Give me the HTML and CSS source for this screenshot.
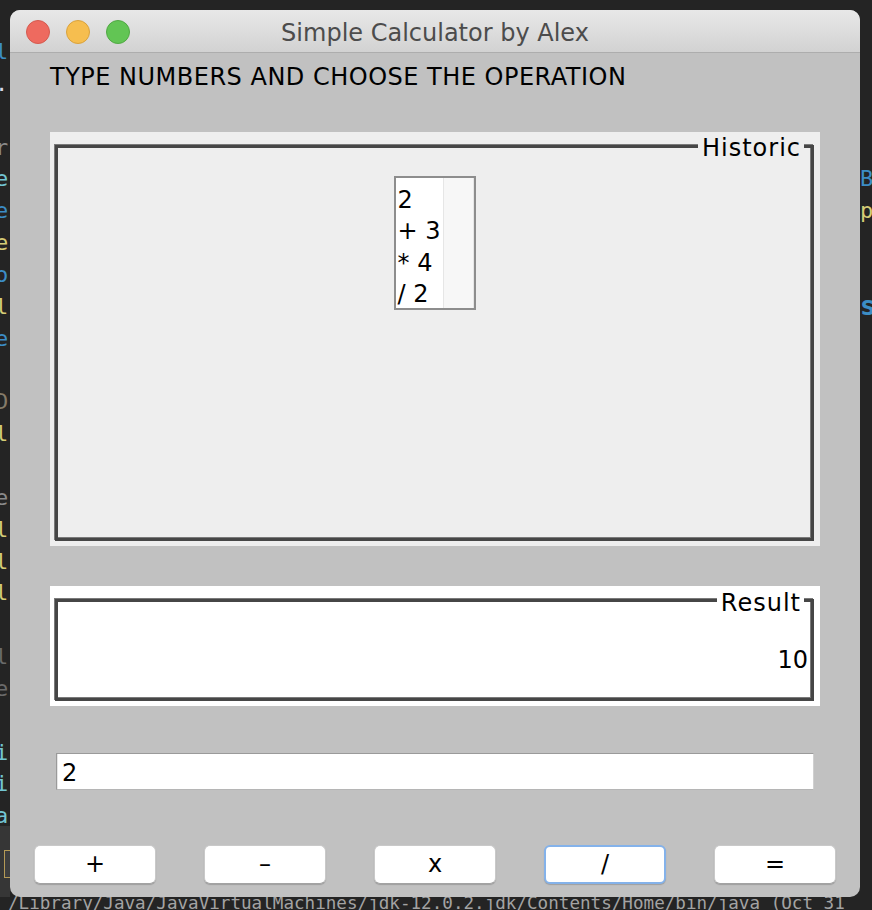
FILE: index.html
```html
<!DOCTYPE html>
<html>
<head>
<meta charset="utf-8">
<link rel="stylesheet" href="styles.css">
</head>
<body>
<div class="edge edge-left">
  <div class="ln c-blue">l</div>
  <div class="ln c-white">.</div>
  <div class="ln"></div>
  <div class="ln c-gray">r</div>
  <div class="ln c-cyan">e</div>
  <div class="ln c-blue">e</div>
  <div class="ln c-yellow">e</div>
  <div class="ln c-blue">o</div>
  <div class="ln c-yellow">l</div>
  <div class="ln c-blue">e</div>
  <div class="ln"></div>
  <div class="ln c-tan">D</div>
  <div class="ln c-yellow">l</div>
  <div class="ln"></div>
  <div class="ln c-gray">e</div>
  <div class="ln c-yellow">l</div>
  <div class="ln c-yellow">l</div>
  <div class="ln c-yellow">l</div>
  <div class="ln"></div>
  <div class="ln c-dim">l</div>
  <div class="ln c-dim">e</div>
  <div class="ln"></div>
  <div class="ln c-cyan">i</div>
  <div class="ln c-cyan">i</div>
  <div class="ln c-cyan">a</div>
</div>
<div class="edge-box"><span></span></div>
<div class="edge edge-right">
  <div class="ln"></div>
  <div class="ln"></div>
  <div class="ln"></div>
  <div class="ln"></div>
  <div class="ln c-blue">B</div>
  <div class="ln c-yellow">p</div>
  <div class="ln"></div>
  <div class="ln"></div>
  <div class="ln c-blue big">s</div>
</div>
<div class="console">/Library/Java/JavaVirtualMachines/jdk-12.0.2.jdk/Contents/Home/bin/java (Oct 31</div>

<div class="window">
  <div class="titlebar">
    <div class="lights">
      <span class="light red"></span>
      <span class="light yellow"></span>
      <span class="light green"></span>
    </div>
    <div class="title">Simple Calculator by Alex</div>
  </div>
  <div class="content">
    <div class="heading">TYPE NUMBERS AND CHOOSE THE OPERATION</div>
    <div class="panel panel-hist">
      <div class="frame frame-hist">
        <span class="legend legend-hist">Historic</span>
        <div class="list">
          <div class="list-items">
            <div>2</div>
            <div>+ 3</div>
            <div>* 4</div>
            <div>/ 2</div>
          </div>
          <div class="scroll"></div>
        </div>
      </div>
    </div>
    <div class="panel panel-res">
      <div class="frame frame-res">
        <span class="legend legend-res">Result</span>
        <div class="result">10</div>
      </div>
    </div>
    <div class="field">2</div>
    <div class="buttons">
      <button class="btn">+</button>
      <button class="btn">&#8211;</button>
      <button class="btn">x</button>
      <button class="btn focus">/</button>
      <button class="btn">=</button>
    </div>
  </div>
</div>
</body>
</html>
```
FILE: styles.css
```css
html, body {
  margin: 0;
  padding: 0;
}
body {
  width: 872px;
  height: 910px;
  background: #242424;
  position: relative;
  overflow: hidden;
  font-family: "DejaVu Sans", sans-serif;
}
.edge {
  position: absolute;
  top: 36px;
  overflow: hidden;
  font-family: "DejaVu Sans Mono", monospace;
  font-size: 22px;
}
.edge-left {
  left: 0;
  width: 10px;
}
.edge-left .ln {
  margin-left: -5px;
}
.edge-right {
  left: 860px;
  width: 12px;
}
.ln {
  height: 31.85px;
  line-height: 31.85px;
  white-space: pre;
}
.big { font-size: 26px; font-weight: bold; }
.c-blue { color: #3c8dc5; }
.c-cyan { color: #72c5d2; }
.c-yellow { color: #d5cc76; }
.c-gray { color: #8a8a8a; }
.c-dim { color: #6a6a6a; }
.c-tan { color: #857b69; }
.c-white { color: #d8d8e8; }
.edge-box {
  position: absolute;
  left: 0;
  top: 826px;
  width: 10px;
  height: 71px;
  background: #363636;
}
.edge-box span {
  display: block;
  margin: 24px 0 0 4px;
  width: 6px;
  height: 26px;
  border: 1px solid #b59a56;
  border-right: none;
  background: #3e3e3e;
}
.console {
  position: absolute;
  left: 8px;
  top: 893px;
  font-family: "DejaVu Sans Mono", monospace;
  font-size: 17.6px;
  color: #a3a3a3;
  white-space: nowrap;
}

.window {
  position: absolute;
  left: 10px;
  top: 10px;
  width: 850px;
  height: 887px;
  background: #c1c1c1;
  border-radius: 10px;
  overflow: hidden;
}
.titlebar {
  height: 42px;
  background: linear-gradient(#e8e8e8, #d2d2d2);
  border-bottom: 1px solid #adadad;
  position: relative;
  display: flex;
  align-items: center;
}
.lights {
  display: flex;
  gap: 16px;
  padding-left: 16px;
  padding-top: 2px;
}
.light {
  width: 22px;
  height: 22px;
  border-radius: 50%;
  border: 1px solid;
}
.red { background: #ee6a5f; border-color: #d45a4f; }
.yellow { background: #f6be4f; border-color: #d9a23d; }
.green { background: #62c554; border-color: #51a844; }
.title {
  position: absolute;
  left: 0;
  right: 0;
  top: 0;
  height: 42px;
  line-height: 46px;
  text-align: center;
  font-family: "DejaVu Sans", sans-serif;
  font-size: 24px;
  color: #4c4c4c;
}
.content {
  display: flex;
  flex-direction: column;
}
.heading {
  margin: 8px 0 0 40px;
  height: 32px;
  line-height: 32px;
  font-size: 24px;
  letter-spacing: 0.5px;
  color: #000;
}
.panel {
  margin: 0 40px;
  width: 770px;
  box-sizing: border-box;
  padding: 13px 6px 5px 4px;
}
.panel-hist {
  margin-top: 39px;
  height: 414px;
  background: #eeeeee;
}
.panel-res {
  margin-top: 40px;
  height: 120px;
  background: #ffffff;
}
.frame {
  position: relative;
  height: 100%;
  box-sizing: border-box;
  border: 3px solid #464646;
  box-shadow: -1px -1px 0 #7a7a7a, inset -1px -1px 0 #7a7a7a;
  margin-left: 1px;
}
.legend {
  position: absolute;
  right: 7px;
  padding: 0 3px 0 4px;
  font-size: 24px;
  letter-spacing: 1px;
  line-height: 30px;
  color: #000;
}
.legend-hist { background: #eeeeee; top: -15px; }
.legend-res { background: #ffffff; top: -14px; }
.frame-hist {
  display: flex;
  justify-content: center;
  align-items: flex-start;
  padding-top: 28px;
}
.list {
  display: flex;
  width: 82px;
  height: 134px;
  box-sizing: border-box;
  border: 2px solid #8d8d8d;
  background: #ffffff;
  overflow: hidden;
}
.list-items {
  width: 45px;
  padding-left: 2px;
  font-size: 24px;
  line-height: 31.3px;
  color: #000;
  padding-top: 7px;
}
.scroll {
  flex: 1;
  background: #f7f7f7;
  border-left: 1px solid #e6e6e6;
  border-right: 1px solid #e6e6e6;
}
.frame-res {
  display: flex;
  align-items: center;
  justify-content: flex-end;
  padding-right: 3px;
}
.result {
  font-size: 24px;
  margin-top: 20px;
  color: #000;
}
.field {
  margin: 47px 0 0 46px;
  width: 758px;
  height: 37px;
  box-sizing: border-box;
  background: #ffffff;
  border-top: 1px solid #9a9a9a;
  border-left: 1px solid #9a9a9a;
  border-right: 1px solid #d0d0d0;
  border-bottom: 1px solid #b5b5b5;
  box-shadow: inset 1px 0 0 #e6e6e6;
  padding-left: 5px;
  font-size: 24px;
  line-height: 38px;
  color: #000;
}
.buttons {
  display: flex;
  gap: 48px;
  margin: 55px 0 0 24px;
}
.btn {
  width: 122px;
  height: 39px;
  box-sizing: border-box;
  background: #ffffff;
  border: 1px solid #c9c9c9;
  border-bottom-color: #a3a3a3;
  border-radius: 6px;
  box-shadow: 0 1px 1px rgba(0,0,0,0.18);
  font-family: "DejaVu Sans", sans-serif;
  font-size: 24px;
  color: #000;
  padding: 0;
  line-height: 37px;
}
.btn.focus {
  border: 2px solid #84b2ea;
  line-height: 35px;
}
```
